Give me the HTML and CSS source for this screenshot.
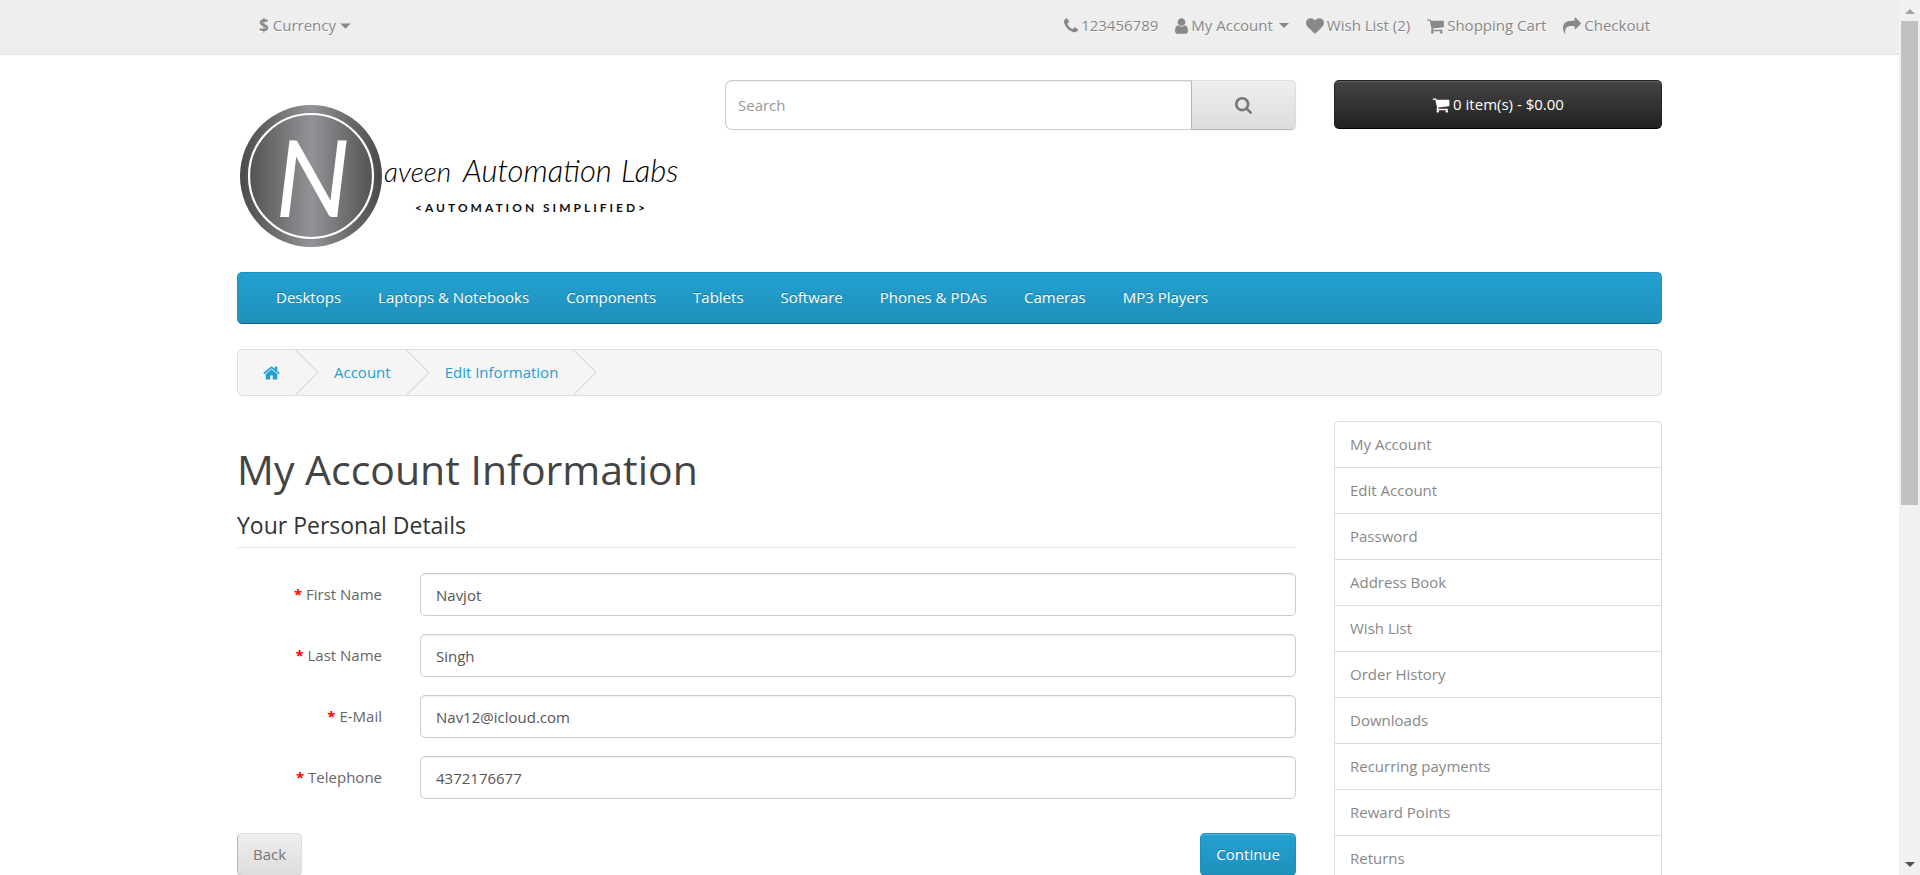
FILE: index.html
```html
<!DOCTYPE html>
<html lang="en">
<head>
<meta charset="utf-8">
<meta name="viewport" content="width=device-width, initial-scale=1">
<title>My Account Information</title>
<link rel="stylesheet" href="styles.css">
</head>
<body>
<svg class="sprite" aria-hidden="true">
  <symbol id="i-phone" viewBox="192 0 1408 1792"><path d="M1600 1240q0 27-10 70.500t-21 68.500q-21 50-122 106-94 51-186 51-27 0-53-3.500t-57.500-12.500-47-14.500-55.500-20.500-49-18q-98-35-175-83-127-79-264-216t-216-264q-48-77-83-175-3-9-18-49t-20.500-55.500-14.500-47-12.500-57.500-3.500-53q0-92 51-186 56-101 106-122 25-11 68.500-21t70.500-10q14 0 21 3 18 6 53 76 11 19 30 54t35 63.500 31 53.500q3 4 17.500 25t21.500 35.500 7 28.500q0 20-28.500 50t-62 55-62 53-28.500 46q0 9 5 22.500t8.500 20.500 14 24 11.500 19q76 137 174 235t235 174q2 1 19 11.500t24 14 20.500 8.500 22.500 5q18 0 46-28.500t53-62 55-62 50-28.500q14 0 28.500 7t35.500 21.500 25 17.500q25 15 53.500 31t63.500 35 54 30q70 35 76 53 3 7 3 21z"/></symbol>
  <symbol id="i-user" viewBox="256 0 1280 1792"><path d="M1536 1399q0 109-62.500 187t-150.500 78h-854q-88 0-150.500-78t-62.500-187q0-85 8.500-160.500t31.500-152 58.500-131 94-89 134.500-34.500q131 128 313 128t313-128q76 0 134.500 34.500t94 89 58.500 131 31.500 152 8.500 160.500zm-256-887q0 159-112.500 271.500t-271.500 112.500-271.500-112.500-112.500-271.500 112.500-271.500 271.500-112.500 271.500 112.500 112.500 271.500z"/></symbol>
  <symbol id="i-heart" viewBox="0 0 1792 1792"><path d="M896 1664q-26 0-44-18l-624-602q-10-8-27.500-26t-55.500-65.500-68-97.500-53.500-121-23.500-138q0-220 127-344t351-124q62 0 126.500 21.500t120 58 95.500 68.500 76 68q36-36 76-68t95.500-68.500 120-58 126.500-21.500q224 0 351 124t127 344q0 221-229 450l-623 600q-18 18-44 18z"/></symbol>
  <symbol id="i-cart" viewBox="64 0 1664 1792"><path d="M704 1536q0 52-38 90t-90 38-90-38-38-90 38-90 90-38 90 38 38 90zm896 0q0 52-38 90t-90 38-90-38-38-90 38-90 90-38 90 38 38 90zm128-1088v512q0 24-16.500 42.500t-40.500 21.500l-1044 122q13 60 13 70 0 16-24 64h920q26 0 45 19t19 45-19 45-45 19h-1024q-26 0-45-19t-19-45q0-11 8-31.500t16-36 21.500-40 15.500-29.500l-177-823h-204q-26 0-45-19t-19-45 19-45 45-19h256q16 0 28.500 6.500t19.500 15.500 13 24.500 8 26 5.500 29.500 4.500 26h1201q26 0 45 19t19 45z"/></symbol>
  <symbol id="i-share" viewBox="0 0 1792 1792"><path d="M1792 640q0 26-19 45l-512 512q-19 19-45 19t-45-19-19-45v-256h-224q-98 0-175.500 6t-154 21.500-133 42.500-105.500 69.500-80 101-48.500 138.500-17.500 181q0 55 5 123 0 6 2.500 23.500t2.500 26.500q0 15-8.500 25t-23.500 10q-16 0-28-17-7-9-13-22t-13.500-30-10.500-24q-127-285-127-451 0-199 53-333 162-403 875-403h224v-256q0-26 19-45t45-19 45 19l512 512q19 19 19 45z"/></symbol>
  <symbol id="i-search" viewBox="64 128 1664 1664"><path d="M1216 832q0-185-131.500-316.500t-316.500-131.500-316.500 131.500-131.500 316.500 131.500 316.500 316.500 131.500 316.500-131.500 131.500-316.500zm512 832q0 52-38 90t-90 38q-54 0-90-38l-343-342q-179 124-399 124-143 0-273.500-55.500t-225-150-150-225-55.500-273.500 55.500-273.500 150-225 225-150 273.500-55.500 273.500 55.500 225 150 150 225 55.500 273.500q0 220-124 399l343 343q37 37 37 90z"/></symbol>
  <symbol id="i-home" viewBox="64 0 1664 1792"><path d="M1472 992v480q0 26-19 45t-45 19h-384v-384h-256v384h-384q-26 0-45-19t-19-45v-480q0-1 .5-3t.5-3l575-474 575 474q1 2 1 6zm223-69l-62 74q-8 9-21 11h-3q-13 0-21-7l-692-577-692 577q-12 8-24 7-13-2-21-11l-62-74q-8-10-7-23.500t11-21.500l719-599q32-26 76-26t76 26l244 204v-195q0-14 9-23t23-9h192q14 0 23 9t9 23v408l219 182q10 8 11 21.500t-7 23.500z"/></symbol>
  <symbol id="i-caret" viewBox="0 0 10 5"><path d="M0 0h10L5 5z"/></symbol>
  <symbol id="i-chevron" viewBox="0 0 24 45"><path d="M0.500 0L23 22.500 0.500 45" fill="none" stroke="#ddd" stroke-width="1.300"/></symbol>
</svg>

<div class="shell">
  <div class="page">
    <nav class="topbar">
      <div class="container topbar-row">
        <button class="currency" type="button"><strong>$</strong><span>Currency</span><svg class="caret caret-lg" viewBox="0 0 10 5"><use href="#i-caret"/></svg></button>
        <ul class="top-links">
          <li><a href="#" aria-label="Contact us"><svg class="icon icon-phone"><use href="#i-phone"/></svg></a><span>123456789</span></li>
          <li><a href="#"><svg class="icon icon-user"><use href="#i-user"/></svg><span>My Account</span><svg class="caret"><use href="#i-caret"/></svg></a></li>
          <li><a href="#"><svg class="icon"><use href="#i-heart"/></svg><span>Wish List (2)</span></a></li>
          <li><a href="#"><svg class="icon icon-cart"><use href="#i-cart"/></svg><span>Shopping Cart</span></a></li>
          <li><a href="#"><svg class="icon"><use href="#i-share"/></svg><span>Checkout</span></a></li>
        </ul>
      </div>
    </nav>

    <div class="container">
      <header class="header">
        <a class="logo" href="#" aria-label="Naveen Automation Labs">
          <svg viewBox="0 0 450 167">
            <defs>
              <linearGradient id="disc"><stop offset="0" stop-color="#4b4a49"/><stop offset=".5" stop-color="#929397"/><stop offset="1" stop-color="#4b4a49"/></linearGradient>
            </defs>
            <circle cx="74" cy="96" r="71" fill="url(#disc)"/>
            <circle cx="74" cy="96" r="62" fill="none" stroke="#fff" stroke-width="2.200"/>
            <text class="logo-n" x="38" y="137">N</text>
            <text class="logo-script logo-script-sm" x="147" y="102">aveen</text>
            <text class="logo-script" x="226" y="102">Automation</text>
            <text class="logo-script" x="384" y="102">Labs</text>
            <text class="logo-tag" x="178" y="132">&lt;AUTOMATION SIMPLIFIED&gt;</text>
          </svg>
        </a>
        <form class="search" role="search">
          <input class="search-input" type="text" placeholder="Search" aria-label="Search">
          <button class="search-btn" type="button" aria-label="Search"><svg><use href="#i-search"/></svg></button>
        </form>
        <button class="cart-btn" type="button"><svg class="icon"><use href="#i-cart"/></svg><span>0 item(s) - $0.00</span></button>
      </header>

      <nav class="menu">
        <a href="#">Desktops</a>
        <a href="#">Laptops &amp; Notebooks</a>
        <a href="#">Components</a>
        <a href="#">Tablets</a>
        <a href="#">Software</a>
        <a href="#">Phones &amp; PDAs</a>
        <a href="#">Cameras</a>
        <a href="#">MP3 Players</a>
      </nav>

      <nav class="breadcrumb" aria-label="Breadcrumb">
        <a href="#" aria-label="Home"><svg class="icon icon-home"><use href="#i-home"/></svg></a>
        <svg class="chevron"><use href="#i-chevron"/></svg>
        <a href="#">Account</a>
        <svg class="chevron"><use href="#i-chevron"/></svg>
        <a href="#">Edit Information</a>
        <svg class="chevron"><use href="#i-chevron"/></svg>
      </nav>

      <div class="columns">
        <main>
          <h1>My Account Information</h1>
          <form>
            <h2 class="legend">Your Personal Details</h2>
            <div class="fields">
              <label for="firstname"><b>*</b> First Name</label>
              <input id="firstname" type="text" value="Navjot">
              <label for="lastname"><b>*</b> Last Name</label>
              <input id="lastname" type="text" value="Singh">
              <label for="email"><b>*</b> E-Mail</label>
              <input id="email" type="email" value="Nav12@icloud.com">
              <label for="telephone"><b>*</b> Telephone</label>
              <input id="telephone" type="tel" value="4372176677">
            </div>
            <div class="actions">
              <a class="btn" href="#">Back</a>
              <button class="btn btn-primary" type="button">Continue</button>
            </div>
          </form>
        </main>
        <aside class="side">
          <a href="#">My Account</a>
          <a href="#">Edit Account</a>
          <a href="#">Password</a>
          <a href="#">Address Book</a>
          <a href="#">Wish List</a>
          <a href="#">Order History</a>
          <a href="#">Downloads</a>
          <a href="#">Recurring payments</a>
          <a href="#">Reward Points</a>
          <a href="#">Returns</a>
        </aside>
      </div>
    </div>
  </div>
  <div class="scrollbar" aria-hidden="true">
    <svg class="arrow arrow-up" viewBox="0 0 10 5"><path d="M0 5h10L5 0z"/></svg>
    <div class="track"><div class="thumb"></div></div>
    <svg class="arrow" viewBox="0 0 10 5"><path d="M0 0h10L5 5z"/></svg>
  </div>
</div>
</body>
</html>
```
FILE: styles.css
```css
* { box-sizing: border-box; }

body {
  margin: 0;
  background: #fff;
  color: #666;
  font: 400 15px/21px "Open Sans", "Noto Sans", sans-serif;
}

a { color: inherit; text-decoration: none; }
button, input { font: inherit; color: inherit; }
button { cursor: pointer; }
svg { display: block; fill: currentColor; flex: none; }

.sprite { position: absolute; width: 0; height: 0; }

.shell { display: flex; height: 100vh; overflow: hidden; }
.page { flex: 1; min-width: 0; overflow: hidden; }
.container { max-width: 1425px; margin: 0 auto; }

.icon { width: 18px; height: 18px; }
.icon-phone { width: 14px; }
.icon-user { width: 13px; }
.icon-cart { width: 17px; }
.icon-home { width: 17px; }
.caret { width: 10px; height: 5px; margin-left: 3px; }
.caret-lg { width: 11px; height: 6px; margin-left: 0; }

/* Top bar */
.topbar {
  padding: 15px 0 18px;
  background: #eee;
  border-bottom: 1px solid #e2e2e2;
  color: #888;
  text-shadow: 0 1px 0 #fff;
}
.topbar-row {
  display: flex;
  justify-content: space-between;
  padding: 0 12px 0 22px;
}
.currency {
  display: flex;
  align-items: center;
  gap: 4px;
  padding: 0;
  border: 0;
  background: none;
  text-shadow: inherit;
}
.currency strong { font-size: 17px; }
.top-links {
  display: flex;
  gap: 17px;
  margin: 0;
  padding: 0;
  list-style: none;
}
.top-links li, .top-links a { display: flex; align-items: center; gap: 3px; }

/* Header */
.header {
  display: grid;
  grid-template-columns: 450fr 571fr 328fr;
  gap: 38px;
  align-items: start;
  padding: 25px 0;
}
.logo svg { width: 100%; height: auto; }
.logo-n { font: italic 400 106px "Lato", sans-serif; fill: #fff; }
.logo-script { font: italic 300 31px "Lato", sans-serif; fill: #000; }
.logo-script-sm { font-size: 28px; }
.logo-tag { font: 700 12px "Lato", sans-serif; letter-spacing: 3px; fill: #111; }

.search { display: flex; height: 50px; }
.search-input {
  flex: 1;
  min-width: 0;
  padding: 0 12px;
  border: 1px solid #ccc;
  border-right: 0;
  border-radius: 7px 0 0 7px;
  background: #fff;
  box-shadow: inset 0 1px 1px rgba(0, 0, 0, .075);
}
.search-input::placeholder { color: #999; opacity: 1; }
.search-btn {
  display: flex;
  align-items: center;
  justify-content: center;
  width: 105px;
  border: 1px solid;
  border-color: #ddd #ddd #b3b3b3 #b7b7b7;
  border-radius: 0 5px 5px 0;
  background: linear-gradient(#eee, #ddd);
  box-shadow: 0 1px 2px rgba(0, 0, 0, .05);
  color: #777;
}
.search-btn svg { width: 17px; height: 17px; }
.cart-btn {
  display: flex;
  align-items: center;
  justify-content: center;
  gap: 3px;
  height: 49px;
  border: 1px solid;
  border-color: #222 #222 #000;
  border-radius: 5px;
  background: linear-gradient(#444, #222);
  box-shadow: inset 0 1px 0 rgba(255, 255, 255, .15);
  color: #fff;
}

/* Main menu */
.menu {
  display: flex;
  flex-wrap: wrap;
  gap: 0 37px;
  padding: 14px 38px 15px;
  border: 1px solid;
  border-color: #1f90bb #1f90bb #145e7a;
  border-radius: 5px;
  background: linear-gradient(#23a1d1, #1f90bb);
  color: #fff;
  text-shadow: 0 -1px 0 rgba(0, 0, 0, .25);
}

/* Breadcrumb */
.breadcrumb {
  display: flex;
  align-items: center;
  gap: 15px;
  margin: 25px 0;
  padding: 0 25px;
  border: 1px solid #ddd;
  border-radius: 5px;
  background: #f5f5f5;
  color: #23a1d1;
}
.chevron { width: 24px; height: 45px; }

/* Content */
.columns {
  display: grid;
  grid-template-columns: 1059fr 328fr;
  gap: 38px;
  align-items: start;
}
h1 {
  margin: 26px 0 17px;
  color: #444;
  font-size: 41px;
  font-weight: 400;
  line-height: 45px;
}
.legend {
  margin: 0 0 25px;
  padding-bottom: 6px;
  border-bottom: 1px solid #e5e5e5;
  color: #333;
  font-size: 23px;
  font-weight: 400;
  line-height: 32px;
}
.fields {
  display: grid;
  grid-template-columns: 145fr 876fr;
  gap: 18px 38px;
  align-items: center;
}
.fields label { text-align: right; }
.fields b { color: #f00; }
.fields input {
  width: 100%;
  height: 43px;
  padding: 0 15px;
  border: 1px solid #ccc;
  border-radius: 5px;
  background: #fff;
  box-shadow: inset 0 1px 1px rgba(0, 0, 0, .075);
  color: #555;
}
.actions { display: flex; justify-content: space-between; margin-top: 34px; }
.btn {
  padding: 10px 15px;
  border: 1px solid;
  border-color: #ddd #ddd #b3b3b3 #b7b7b7;
  border-radius: 5px;
  background: linear-gradient(#eee, #ddd);
  box-shadow: inset 0 1px 0 rgba(255, 255, 255, .2), 0 1px 2px rgba(0, 0, 0, .05);
  color: #777;
}
.btn-primary {
  border-color: #1f90bb #1f90bb #145e7a;
  background: linear-gradient(#23a1d1, #1f90bb);
  color: #fff;
  text-shadow: 0 -1px 0 rgba(0, 0, 0, .25);
}

/* Account links */
.side {
  border: 1px solid #ddd;
  border-radius: 5px;
  color: #888;
}
.side a { display: block; padding: 12px 15px; }
.side a + a { border-top: 1px solid #ddd; }

/* Scrollbar */
.scrollbar {
  display: flex;
  flex-direction: column;
  align-items: center;
  gap: 7px;
  width: 21px;
  padding: 9px 2px 8px;
  background: #f1f1f1;
  color: #505050;
}
.arrow { width: 10px; height: 5px; }
.arrow-up { color: #a3a3a3; }
.track { flex: 1; width: 100%; }
.thumb { height: 58%; background: #c1c1c1; }
```
